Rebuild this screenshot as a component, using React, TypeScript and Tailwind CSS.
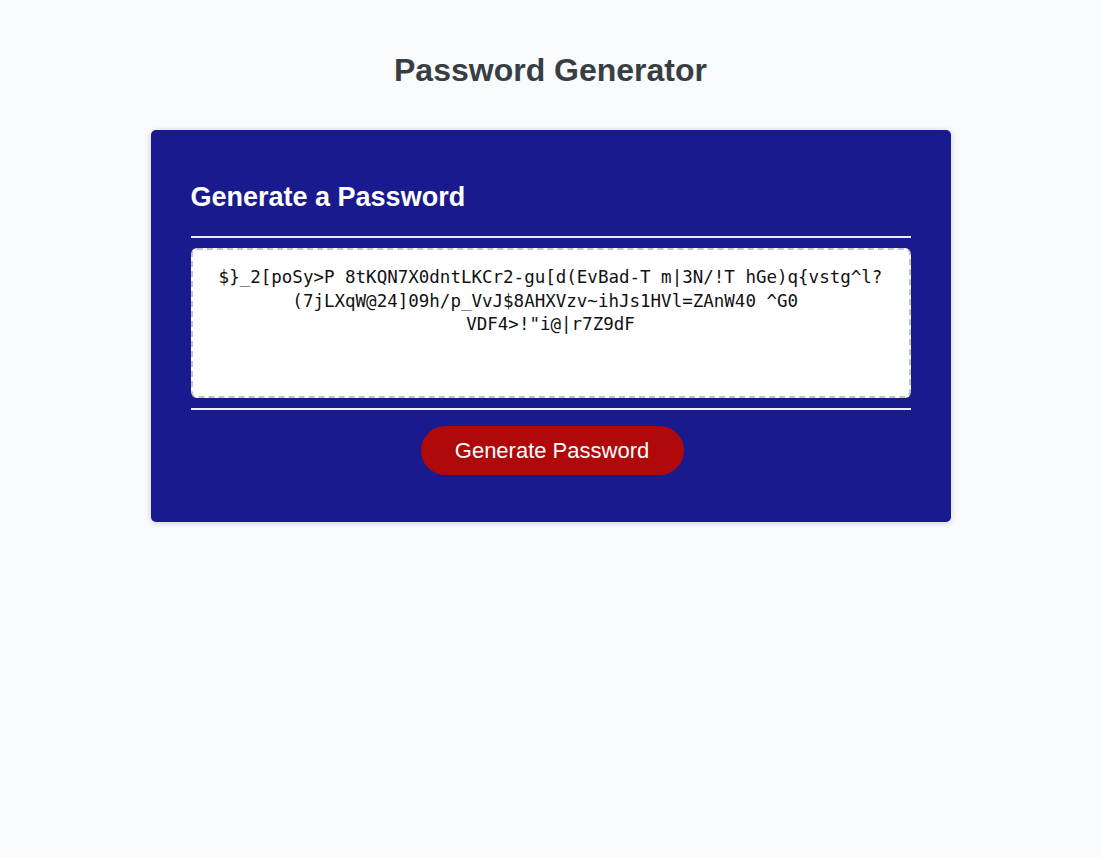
import React from "react";

const PASSWORD =
  "$}_2[poSy>P 8tKQN7X0dntLKCr2-gu[d(EvBad-T m|3N/!T hGe)q{vstg^l?\n(7jLXqW@24]09h/p_VvJ$8AHXVzv~ihJs1HVl=ZAnW40 ^G0\u00a0\nVDF4>!\"i@|r7Z9dF";

export default function App() {
  return (
    <div className="min-h-[858px] w-full bg-[#f9fafb] font-['Liberation_Sans',Arial,sans-serif]">
      <div className="flex flex-col items-center">
        <h1 className="mt-[52px] text-[32px] leading-[37px] font-bold text-[#373e44]">
          Password Generator
        </h1>
        <div className="mt-[41px] w-[800px] rounded-[5px] bg-[#1a1a8f] px-10 pt-[52px] pb-[47px] shadow-[0_1px_6px_rgba(0,0,0,0.18)]">
          <h2 className="text-[27px] leading-[31px] font-bold text-white">
            Generate a Password
          </h2>
          <div className="mt-[23px] h-[2px] w-full bg-[#eeeeee]" />
          <textarea
            readOnly
            value={PASSWORD}
            className="mt-[10px] block h-[150px] w-full resize-none rounded-[6px] border-2 border-dashed border-[#c2c3c6] bg-white px-4 pt-[16px] text-center font-['DejaVu_Sans_Mono',monospace] text-[17.5px] leading-[23.5px] text-[#111111] outline-none"
          />
          <div className="mt-[10px] h-[2px] w-full bg-[#eeeeee]" />
          <div className="mt-[16px] flex justify-center pl-[3px]">
            <button className="h-[49px] w-[263px] rounded-full bg-[#b00909] text-[22px] leading-[25px] text-white">
              Generate Password
            </button>
          </div>
        </div>
      </div>
    </div>
  );
}
